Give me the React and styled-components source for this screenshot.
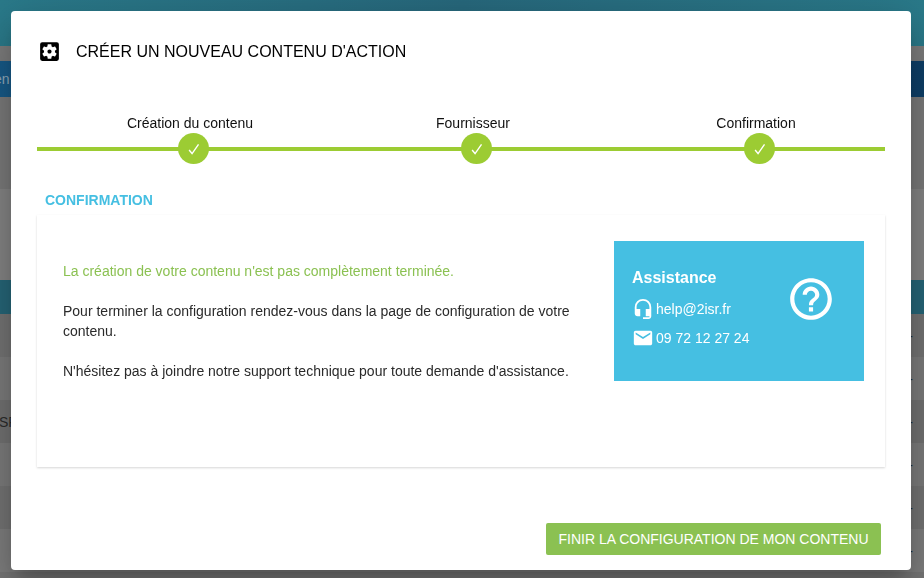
import styled, { createGlobalStyle } from 'styled-components'
import { MdSettingsApplications, MdHelpOutline, MdHeadsetMic, MdEmail } from 'react-icons/md'

const GlobalStyle = createGlobalStyle`
  html, body {
    margin: 0;
    padding: 0;
    height: 100%;
    overflow: hidden;
    font-family: 'Liberation Sans', Arial, sans-serif;
    color: #2a2a2a;
  }
`

const steps = ['Création du contenu', 'Fournisseur', 'Confirmation']
const rowShades = ['#747474', '#7c7c7c', '#727272', '#7c7c7c', '#747474', '#7e7e7e']

const App = () => (
  <>
    <GlobalStyle />
    <Page>
      <TopBar />
      <Gap />
      <BlueBar>en</BlueBar>
      <GraySection />
      <GrayLight />
      <TealBar />
      {rowShades.map((shade, i) => (
        <TableRow key={i} $shade={shade}>
          <span>{i === 2 ? 'SR' : ''}</span>
          <i>-</i>
        </TableRow>
      ))}
    </Page>

    <Modal>
      <Header>
        <GearIcon size={25} color='#000' />
        <h2>CRÉER UN NOUVEAU CONTENU D'ACTION</h2>
      </Header>

      <Stepper>
        <Line />
        {steps.map((step) => (
          <Step key={step}>
            <label>{step}</label>
            <Circle>
              <svg width='12' height='12' viewBox='0 0 13 13' fill='none'>
                <path d='M1.2 7.6 L4.4 11.4 L11.4 1.4' stroke='#fff' strokeWidth='1.5' />
              </svg>
            </Circle>
          </Step>
        ))}
      </Stepper>

      <SectionTitle>CONFIRMATION</SectionTitle>

      <Card>
        <CardText>
          <GreenText>La création de votre contenu n'est pas complètement terminée.</GreenText>
          <p>Pour terminer la configuration rendez-vous dans la page de configuration de votre contenu.</p>
          <p>N'hésitez pas à joindre notre support technique pour toute demande d'assistance.</p>
        </CardText>
        <HelpBox>
          <div>
            <h3>Assistance</h3>
            <Contact>
              <MdHeadsetMic size={22} />
              help@2isr.fr
            </Contact>
            <Contact>
              <MdEmail size={22} />
              09 72 12 27 24
            </Contact>
          </div>
          <QuestionIcon size={50} />
        </HelpBox>
      </Card>

      <Footer>
        <FinishButton>FINIR LA CONFIGURATION DE MON CONTENU</FinishButton>
      </Footer>
    </Modal>
  </>
)

export default App

const Page = styled.div`
  height: 578px;
  overflow: hidden;
  background: #767676;
`

const TopBar = styled.div`
  height: 46px;
  background: linear-gradient(90deg, #2a7a8a, #27687c 50%, #2a7a8a);
`

const Gap = styled.div`
  height: 15px;
  background: #7c7c7c;
`

const BlueBar = styled.div`
  height: 36px;
  line-height: 36px;
  text-indent: -6px;
  font-size: 14px;
  color: #8fa9bb;
  background: linear-gradient(90deg, #175a88, #0e3f68);
`

const GraySection = styled.div`
  height: 92px;
  background: #7a7a7a;
`

const GrayLight = styled.div`
  height: 91px;
  background: #848484;
`

const TealBar = styled.div`
  height: 34px;
  background: #266678;
`

const TableRow = styled.div`
  height: 43px;
  padding-right: 11px;
  display: flex;
  align-items: center;
  justify-content: space-between;
  font-size: 14px;
  color: #2b2b2b;
  background: ${(p) => p.$shade};
  i {
    font-style: normal;
    color: #1c2a3a;
  }
  span {
    margin-left: -1px;
  }
`

const Modal = styled.div`
  position: fixed;
  left: 11px;
  top: 11px;
  width: 900px;
  height: 559px;
  box-sizing: border-box;
  padding: 0 26px;
  background: #fff;
  border-radius: 4px;
  box-shadow: 0 11px 15px -7px rgba(0, 0, 0, 0.2), 0 24px 38px 3px rgba(0, 0, 0, 0.14),
    0 9px 46px 8px rgba(0, 0, 0, 0.12);
`

const Header = styled.div`
  display: flex;
  align-items: center;
  gap: 14px;
  height: 82px;
  h2 {
    margin: 0;
    font-size: 16px;
    font-weight: 400;
    color: #000;
  }
`

const GearIcon = styled(MdSettingsApplications)`
  margin-top: -1px;
`

const Stepper = styled.div`
  position: relative;
  display: grid;
  grid-template-columns: repeat(3, 283px);
  margin-top: 20px;
  padding-left: 15px;
`

const Line = styled.div`
  position: absolute;
  left: 0;
  right: 0;
  bottom: 13px;
  height: 4px;
  background: #9ccc33;
`

const Step = styled.div`
  position: relative;
  display: flex;
  flex-direction: column;
  align-items: center;
  label {
    margin-right: 7px;
    font-size: 14px;
    line-height: 20px;
    color: #111;
    white-space: nowrap;
  }
`

const Circle = styled.div`
  display: flex;
  align-items: center;
  justify-content: center;
  width: 31px;
  height: 31px;
  border-radius: 50%;
  background: #9ccc33;
`

const SectionTitle = styled.div`
  margin: 28px 0 0 8px;
  font-size: 14px;
  line-height: 16px;
  font-weight: 700;
  color: #45bfe2;
`

const Card = styled.div`
  display: flex;
  justify-content: space-between;
  align-items: flex-start;
  height: 252px;
  box-sizing: border-box;
  margin-top: 7px;
  padding: 26px 21px 0 26px;
  background: #fff;
  box-shadow: 0 1px 2px rgba(0, 0, 0, 0.16);
`

const CardText = styled.div`
  width: 530px;
  padding-top: 20px;
  font-size: 14px;
  line-height: 20px;
  p {
    margin: 0 0 20px;
  }
`

const GreenText = styled.p`
  color: #8bc152;
`

const HelpBox = styled.div`
  display: flex;
  align-items: flex-start;
  justify-content: space-between;
  width: 250px;
  height: 140px;
  box-sizing: border-box;
  padding: 27px 28px 0 18px;
  color: #fff;
  background: #45bfe2;
  h3 {
    margin: 0 0 10px;
    font-size: 16px;
    line-height: 20px;
    font-weight: 700;
  }
`

const QuestionIcon = styled(MdHelpOutline)`
  margin-top: 6px;
`

const Contact = styled.div`
  display: flex;
  align-items: center;
  gap: 2px;
  margin-top: 7px;
  font-size: 14px;
  line-height: 22px;
`

const Footer = styled.div`
  display: flex;
  justify-content: flex-end;
  margin-top: 56px;
  padding-right: 4px;
`

const FinishButton = styled.button`
  height: 32px;
  width: 335px;
  padding: 0;
  border: none;
  border-radius: 2px;
  background: #8bc152;
  color: #fff;
  font-family: inherit;
  font-size: 14px;
`
